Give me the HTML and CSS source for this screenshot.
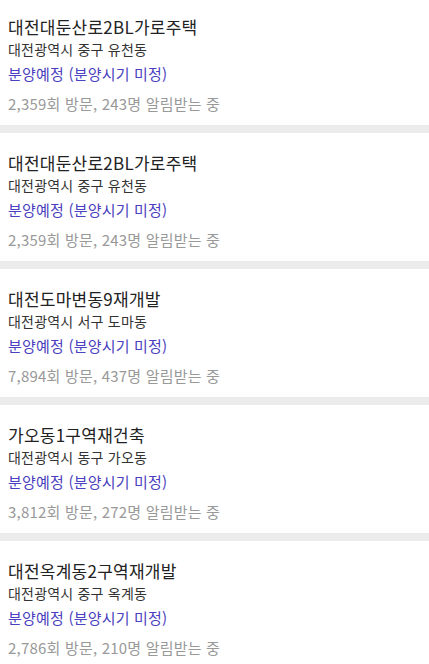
FILE: index.html
```html
<!DOCTYPE html>
<html lang="ko">
<head>
<meta charset="utf-8">
<link rel="stylesheet" href="styles.css">
</head>
<body>
<ul class="list">
  <li class="item">
    <div class="title">대전대둔산로2BL가로주택</div>
    <div class="addr">대전광역시 중구 유천동</div>
    <div class="status">분양예정 (분양시기 미정)</div>
    <div class="stats">2,359회 방문, 243명 알림받는 중</div>
  </li>
  <li class="item">
    <div class="title">대전대둔산로2BL가로주택</div>
    <div class="addr">대전광역시 중구 유천동</div>
    <div class="status">분양예정 (분양시기 미정)</div>
    <div class="stats">2,359회 방문, 243명 알림받는 중</div>
  </li>
  <li class="item">
    <div class="title">대전도마변동9재개발</div>
    <div class="addr">대전광역시 서구 도마동</div>
    <div class="status">분양예정 (분양시기 미정)</div>
    <div class="stats">7,894회 방문, 437명 알림받는 중</div>
  </li>
  <li class="item">
    <div class="title">가오동1구역재건축</div>
    <div class="addr">대전광역시 동구 가오동</div>
    <div class="status">분양예정 (분양시기 미정)</div>
    <div class="stats">3,812회 방문, 272명 알림받는 중</div>
  </li>
  <li class="item">
    <div class="title">대전옥계동2구역재개발</div>
    <div class="addr">대전광역시 중구 옥계동</div>
    <div class="status">분양예정 (분양시기 미정)</div>
    <div class="stats">2,786회 방문, 210명 알림받는 중</div>
  </li>
</ul>
</body>
</html>
```
FILE: styles.css
```css
html, body {
  margin: 0;
  padding: 0;
  background: #fff;
}
body {
  font-family: "Noto Sans CJK KR", "Noto Sans", sans-serif;
  letter-spacing: 0.2px;
  overflow: hidden;
}
.list {
  list-style: none;
  margin: 0;
  padding: 0;
  display: flex;
  flex-direction: column;
  gap: 8px;
  background: #ebebeb;
}
.item {
  background: #fff;
  padding: 18px 8px 9px;
  height: 128px;
  box-sizing: border-box;
}
.item:first-child {
  padding-top: 15px;
  height: 125px;
}
.title {
  font-size: 17px;
  line-height: 24px;
  color: #222;
  letter-spacing: 0.25px;
}
.addr {
  font-size: 14px;
  line-height: 21px;
  color: #333;
}
.status {
  margin-top: 2px;
  font-size: 15px;
  line-height: 24px;
  color: #4a41c0;
}
.stats {
  margin-top: 6px;
  font-size: 15px;
  line-height: 24px;
  color: #999;
}
```
